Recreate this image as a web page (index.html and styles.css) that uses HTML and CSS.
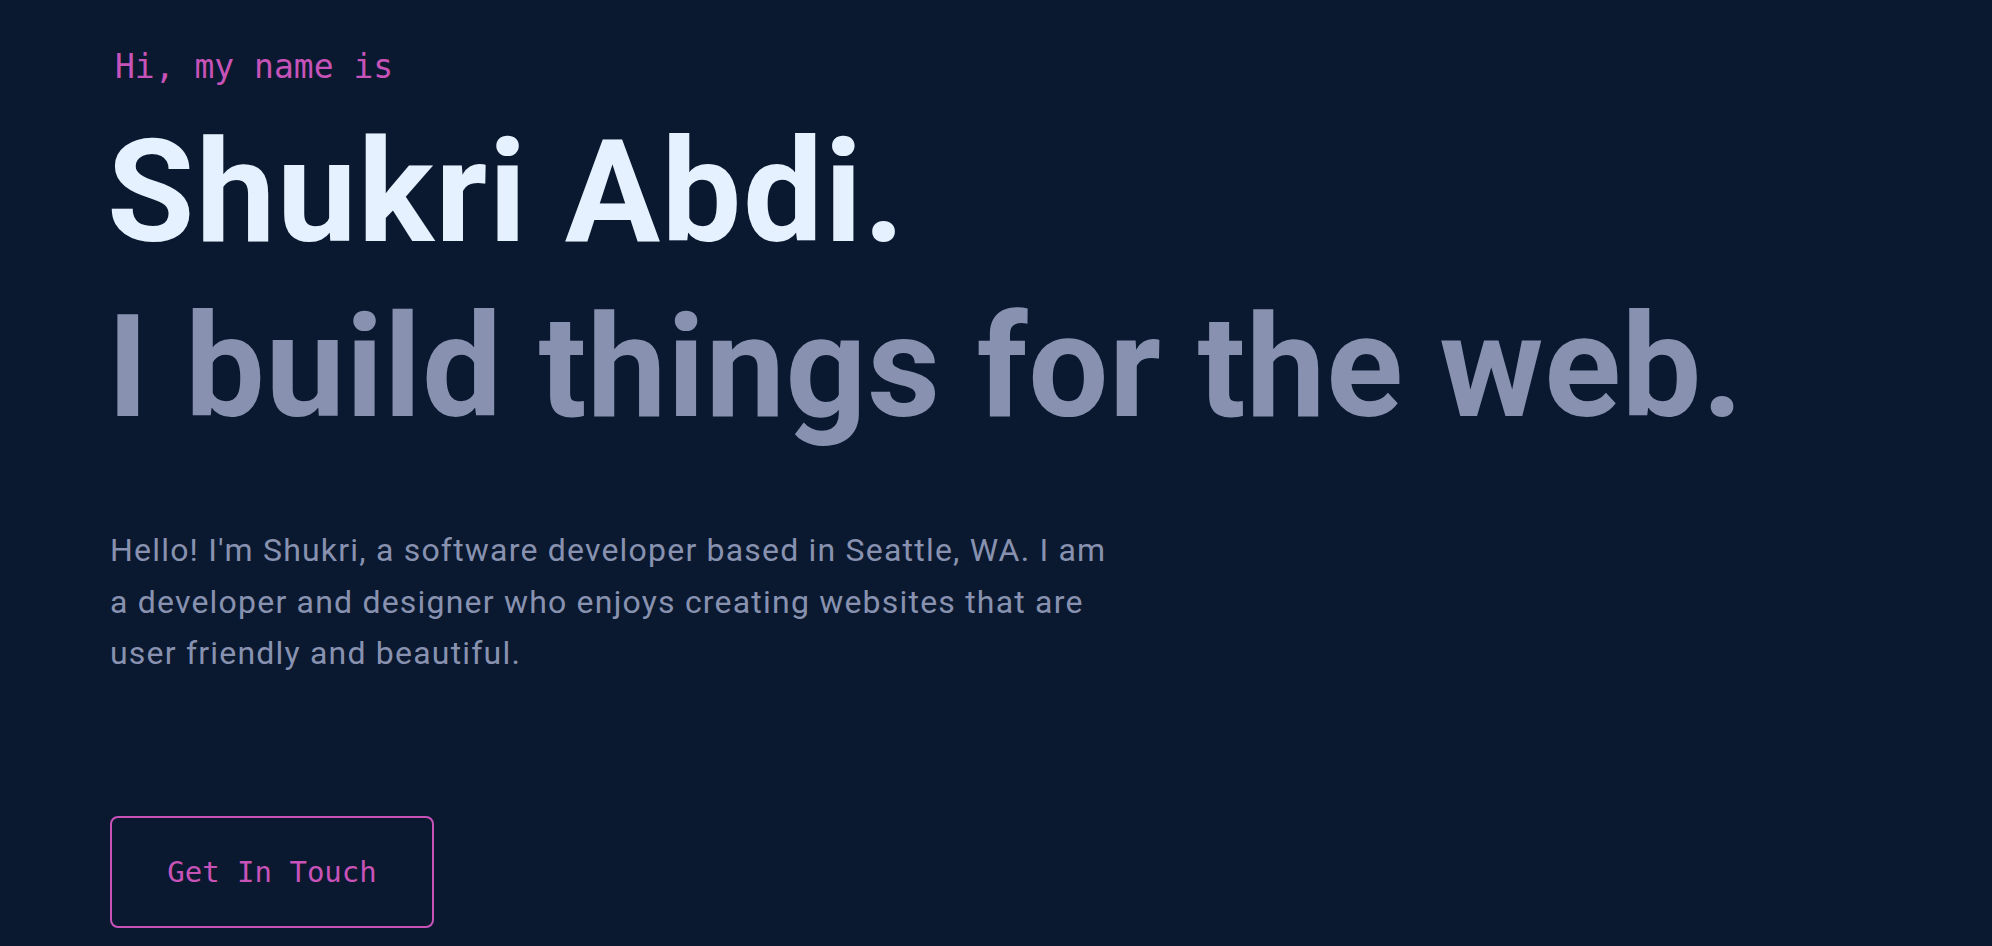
FILE: index.html
```html
<!DOCTYPE html>
<html lang="en">
<head>
<meta charset="utf-8">
<title>Shukri Abdi</title>
<link rel="stylesheet" href="styles.css">
</head>
<body>
<main class="hero">
  <p class="hero-intro">Hi, my name is</p>
  <h1 class="hero-name">Shukri Abdi.</h1>
  <h2 class="hero-tagline">I build things for the web.</h2>
  <p class="hero-text">Hello! I'm Shukri, a software developer based in Seattle, WA. I am a developer and designer who enjoys creating websites that are user friendly and beautiful.</p>
  <a class="hero-button" href="#contact">Get In Touch</a>
</main>
</body>
</html>
```
FILE: styles.css
```css
html, body {
  margin: 0;
  padding: 0;
  background: #0a192f;
  height: 100%;
  overflow: hidden;
}

.hero {
  display: flex;
  flex-direction: column;
  align-items: flex-start;
  padding: 47px 0 0 110px;
}

.hero-intro {
  margin: 0;
  font-family: "DejaVu Sans Mono", "Liberation Mono", monospace;
  font-size: 33px;
  line-height: 40px;
  color: #c753b9;
  padding-left: 5px;
}

.hero-name,
.hero-tagline {
  margin: 0;
  font-family: Roboto, "Liberation Sans", sans-serif;
  font-weight: 700;
  font-size: 142px;
  line-height: 175px;
  margin-left: -3px;
}

.hero-name {
  margin-top: 18px;
  color: #e6f1ff;
  letter-spacing: 1.5px;
}

.hero-tagline {
  color: #8892b0;
  letter-spacing: 0.6px;
}

.hero-text {
  margin: 70px 0 0;
  max-width: 1005px;
  font-family: Roboto, "Liberation Sans", sans-serif;
  font-size: 32px;
  line-height: 51.5px;
  letter-spacing: 1.2px;
  color: #8892b0;
}

.hero-button {
  margin-top: 136px;
  box-sizing: border-box;
  width: 324px;
  height: 112px;
  display: flex;
  align-items: center;
  justify-content: center;
  border: 2px solid #c753b9;
  border-radius: 8px;
  font-family: "DejaVu Sans Mono", "Liberation Mono", monospace;
  font-size: 29px;
  color: #c753b9;
  text-decoration: none;
}
```
